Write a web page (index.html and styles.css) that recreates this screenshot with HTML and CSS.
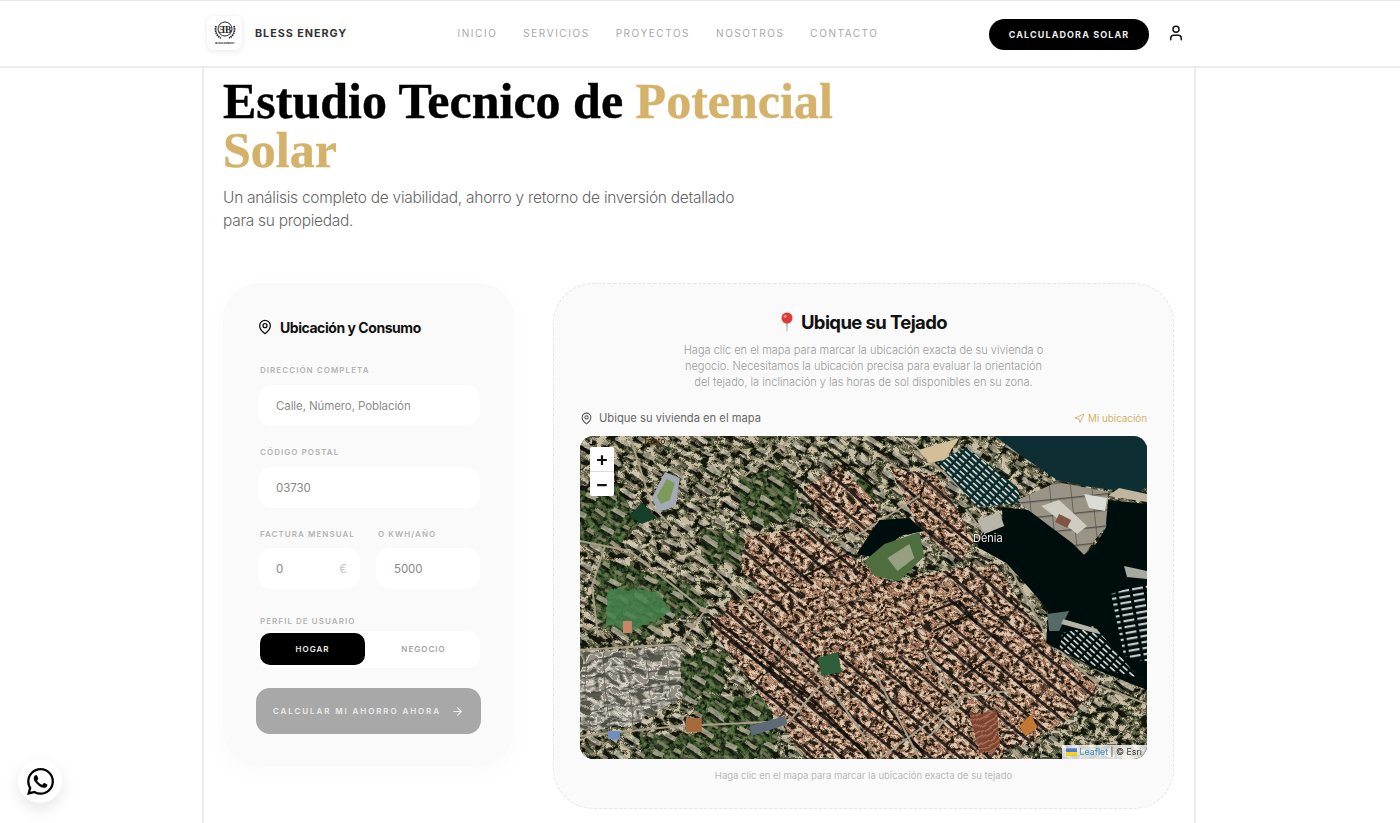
FILE: index.html
```html
<!DOCTYPE html>
<html lang="es">
<head>
    <title>Bless Energy - Estudio Solar</title>
    <meta name="viewport" content="width=device-width, initial-scale=1.0">
    <link rel="stylesheet" href="styles.css">
</head>
<body>
    <div class="header">
        <div class="header-inner">
            <div class="brand">
                <div class="logo">
                    <svg width="26" height="26" viewBox="0 0 26 26" fill="none" stroke="#222">
                        <circle cx="13" cy="9" r="7" stroke-width="1"/>
                        <path d="M4 6c-1.500 5 .5 10 5 12M22 6c1.500 5-.5 10-5 12" stroke-width="1.800" stroke-dasharray="1.500 .7"/>
                        <text x="13" y="12.500" text-anchor="middle" class="logo-mark">ƎB</text>
                        <text x="13" y="24" text-anchor="middle" class="logo-text">BLESS ENERGY</text>
                    </svg>
                </div>
                <span class="brand-name">BLESS ENERGY</span>
            </div>
            <ul class="nav">
                <li><a href="#">INICIO</a></li>
                <li><a href="#">SERVICIOS</a></li>
                <li><a href="#">PROYECTOS</a></li>
                <li><a href="#">NOSOTROS</a></li>
                <li><a href="#">CONTACTO</a></li>
            </ul>
            <div class="header-actions">
                <a href="#" class="cta">CALCULADORA SOLAR</a>
                <svg class="user-icon" width="18" height="18" viewBox="0 0 24 24" fill="none" stroke="#111" stroke-width="2" stroke-linecap="round" stroke-linejoin="round">
                    <path d="M19 21v-2a4 4 0 0 0-4-4H9a4 4 0 0 0-4 4v2"/>
                    <circle cx="12" cy="7" r="4"/>
                </svg>
            </div>
        </div>
    </div>

    <div class="main">
        <h1>Estudio Tecnico de <span class="gold">Potencial</span> <span class="gold">Solar</span></h1>
        <p class="subtitle">Un análisis completo de viabilidad, ahorro y retorno de inversión detallado para su propiedad.</p>

        <div class="columns">
            <div class="form-card">
                <h3>
                    <svg width="16" height="16" viewBox="0 0 24 24" fill="none" stroke="#111" stroke-width="2" stroke-linecap="round" stroke-linejoin="round">
                        <path d="M20 10c0 6-8 12-8 12s-8-6-8-12a8 8 0 0 1 16 0Z"/>
                        <circle cx="12" cy="10" r="3"/>
                    </svg>
                    Ubicación y Consumo
                </h3>

                <label class="field-label">DIRECCIÓN COMPLETA</label>
                <input class="field" type="text" placeholder="Calle, Número, Población">

                <label class="field-label">CÓDIGO POSTAL</label>
                <input class="field" type="text" value="03730">

                <div class="field-row">
                    <div class="field-col">
                        <label class="field-label">FACTURA MENSUAL</label>
                        <div class="field-wrap">
                            <input class="field" type="text" value="0">
                            <span class="euro">€</span>
                        </div>
                    </div>
                    <div class="field-col">
                        <label class="field-label">O KWH/AÑO</label>
                        <input class="field" type="text" value="5000">
                    </div>
                </div>

                <label class="field-label profile-label">PERFIL DE USUARIO</label>
                <div class="toggle">
                    <div class="toggle-item active">HOGAR</div>
                    <div class="toggle-item">NEGOCIO</div>
                </div>

                <button class="submit">
                    CALCULAR MI AHORRO AHORA
                    <svg width="13" height="13" viewBox="0 0 24 24" fill="none" stroke="#eee" stroke-width="2" stroke-linecap="round" stroke-linejoin="round">
                        <path d="M5 12h14M12 5l7 7-7 7"/>
                    </svg>
                </button>
            </div>

            <div class="map-card">
                <h2>
                    <svg width="14" height="20" viewBox="0 0 14 20">
                        <path d="M6.300 10h1.400L7.300 19.500h-.6Z" fill="#9a9a9a"/>
                        <circle cx="7" cy="6" r="5.500" fill="#dd3b35"/>
                        <circle cx="5.200" cy="4.200" r="1.500" fill="#f3908a"/>
                    </svg>
                    Ubique su Tejado
                </h2>
                <p class="map-desc">Haga clic en el mapa para marcar la ubicación exacta de su vivienda o negocio. Necesitamos la ubicación precisa para evaluar la orientación del tejado, la inclinación y las horas de sol disponibles en su zona.</p>

                <div class="map-bar">
                    <span class="map-bar-title">
                        <svg width="13" height="13" viewBox="0 0 24 24" fill="none" stroke="#555" stroke-width="2" stroke-linecap="round" stroke-linejoin="round">
                            <path d="M20 10c0 6-8 12-8 12s-8-6-8-12a8 8 0 0 1 16 0Z"/>
                            <circle cx="12" cy="10" r="3"/>
                        </svg>
                        Ubique su vivienda en el mapa
                    </span>
                    <span class="locate">
                        <svg width="11" height="11" viewBox="0 0 24 24" fill="none" stroke="#d4b26a" stroke-width="2" stroke-linecap="round" stroke-linejoin="round">
                            <polygon points="3 11 22 2 13 21 11 13 3 11"/>
                        </svg>
                        Mi ubicación
                    </span>
                </div>

                <div class="map">
                    <svg class="map-img" viewBox="0 0 568 323" preserveAspectRatio="none">
                        <defs>
                            <!-- street grids laid over the roof noise -->
                            <pattern id="streets-old" width="10" height="17" patternUnits="userSpaceOnUse" patternTransform="rotate(-22)">
                                <rect width="10" height="1.400" fill="#1a130e" opacity=".7"/>
                                <rect width="1" height="17" fill="#2a1f18" opacity=".35"/>
                            </pattern>
                            <pattern id="streets-town" width="37" height="19" patternUnits="userSpaceOnUse" patternTransform="rotate(40)">
                                <rect width="37" height="3" fill="#110c09" opacity=".8"/>
                                <rect y="3" width="37" height="2" fill="#d8ccb8" opacity=".35"/>
                                <rect width="2" height="19" fill="#1c1510" opacity=".65"/>
                                <rect x="18" y="9" width="1.500" height="10" fill="#1c1510" opacity=".5"/>
                            </pattern>
                            <pattern id="bars-west" width="31" height="21" patternUnits="userSpaceOnUse" patternTransform="rotate(30)">
                                <rect x="2" y="2" width="15" height="5" fill="#d4cbb8"/>
                                <rect x="2" y="7" width="15" height="3" fill="#0b0b08"/>
                                <rect x="20" y="12" width="9" height="4" fill="#c2b49c"/>
                                <rect x="20" y="16" width="9" height="2.500" fill="#0b0b08"/>
                                <rect x="4" y="14" width="11" height="3" fill="#9c8f7a"/>
                            </pattern>
                            <pattern id="bars-ind" width="21" height="16" patternUnits="userSpaceOnUse" patternTransform="rotate(-6)">
                                <rect width="21" height="1.400" fill="#44443e" opacity=".8"/>
                                <rect width="1" height="16" fill="#50504a" opacity=".7"/>
                            </pattern>
                            <pattern id="boats" width="9" height="4.500" patternUnits="userSpaceOnUse" patternTransform="rotate(42)">
                                <rect width="6.500" height="1.700" fill="#cfd8d4"/>
                            </pattern>
                            <pattern id="boats-v" width="14" height="6" patternUnits="userSpaceOnUse" patternTransform="rotate(-10)">
                                <rect width="11" height="2.200" fill="#c4cdcb"/>
                            </pattern>
                            <pattern id="stripes" width="5" height="5" patternUnits="userSpaceOnUse" patternTransform="rotate(-30)">
                                <rect width="5" height="5" fill="#7c4432"/>
                                <rect width="5" height="1.500" fill="#ad7458"/>
                            </pattern>

                            <!-- noise mapped to a small palette, cut to the shape it is put on -->
                            <filter id="roofs" x="0" y="0" width="100%" height="100%" color-interpolation-filters="sRGB">
                                <feTurbulence type="fractalNoise" baseFrequency=".2 .26" numOctaves="2" seed="3"/>
                                <feColorMatrix values="3.400 0 0 0 -1.200  3.400 0 0 0 -1.200  3.400 0 0 0 -1.200  0 0 0 0 1"/>
                                <feComponentTransfer>
                                    <feFuncR type="discrete" tableValues=".16 .38 .55 .66 .76 .62 .84"/>
                                    <feFuncG type="discrete" tableValues=".13 .28 .41 .50 .64 .42 .78"/>
                                    <feFuncB type="discrete" tableValues=".10 .22 .32 .40 .52 .34 .68"/>
                                </feComponentTransfer>
                                <feComposite in2="SourceAlpha" operator="in"/>
                            </filter>
                            <filter id="mixed" x="0" y="0" width="100%" height="100%" color-interpolation-filters="sRGB">
                                <feTurbulence type="fractalNoise" baseFrequency=".13 .17" numOctaves="3" seed="12"/>
                                <feColorMatrix values="3.400 0 0 0 -1.200  3.400 0 0 0 -1.200  3.400 0 0 0 -1.200  0 0 0 0 1"/>
                                <feComponentTransfer>
                                    <feFuncR type="discrete" tableValues=".09 .18 .28 .42 .62 .38 .78"/>
                                    <feFuncG type="discrete" tableValues=".10 .22 .32 .42 .58 .38 .74"/>
                                    <feFuncB type="discrete" tableValues=".07 .14 .21 .32 .48 .29 .64"/>
                                </feComponentTransfer>
                                <feComposite in2="SourceAlpha" operator="in"/>
                            </filter>
                            <filter id="trees" x="0" y="0" width="100%" height="100%" color-interpolation-filters="sRGB">
                                <feTurbulence type="fractalNoise" baseFrequency=".22" numOctaves="2" seed="21"/>
                                <feColorMatrix values="3.400 0 0 0 -1.200  3.400 0 0 0 -1.200  3.400 0 0 0 -1.200  0 0 0 0 1"/>
                                <feComponentTransfer>
                                    <feFuncR type="discrete" tableValues=".07 .13 .17 .21 .27 .33"/>
                                    <feFuncG type="discrete" tableValues=".12 .21 .27 .32 .37 .42"/>
                                    <feFuncB type="discrete" tableValues=".06 .10 .13 .16 .19 .24"/>
                                </feComponentTransfer>
                                <feComposite in2="SourceAlpha" operator="in"/>
                            </filter>
                            <filter id="sheds" x="0" y="0" width="100%" height="100%" color-interpolation-filters="sRGB">
                                <feTurbulence type="fractalNoise" baseFrequency=".09 .16" numOctaves="2" seed="7"/>
                                <feColorMatrix values="3.400 0 0 0 -1.200  3.400 0 0 0 -1.200  3.400 0 0 0 -1.200  0 0 0 0 1"/>
                                <feComponentTransfer>
                                    <feFuncR type="discrete" tableValues=".34 .50 .62 .74 .84 .58"/>
                                    <feFuncG type="discrete" tableValues=".35 .50 .61 .73 .83 .56"/>
                                    <feFuncB type="discrete" tableValues=".30 .46 .56 .68 .78 .51"/>
                                </feComponentTransfer>
                                <feComposite in2="SourceAlpha" operator="in"/>
                            </filter>
                            <filter id="rough" x="0" y="0" width="100%" height="100%">
                                <feTurbulence type="fractalNoise" baseFrequency=".05" numOctaves="2" seed="4" result="n"/>
                                <feDisplacementMap in="SourceGraphic" in2="n" scale="10"/>
                                <feGaussianBlur stdDeviation=".75"/>
                            </filter>
                            <filter id="soft">
                                <feGaussianBlur stdDeviation=".7"/>
                            </filter>
                        </defs>

                        <rect width="568" height="323" fill="#4d5239"/>

                        <g filter="url(#rough)">
                            <!-- suburbs over the whole sheet -->
                            <rect width="568" height="323" filter="url(#mixed)"/>

                            <!-- vegetation -->
                            <g opacity=".85">
                                <path d="M0 55 38 48 60 92 30 118 0 108Z" filter="url(#trees)"/>
                                <path d="M160 42 205 30 222 72 182 92 158 70Z" filter="url(#trees)"/>
                                <path d="M120 92 168 100 163 130 125 125Z" filter="url(#trees)"/>
                                <path d="M18 122 110 148 128 168 60 205 14 190Z" filter="url(#trees)"/>
                                <path d="M100 218 148 216 140 258 100 262Z" filter="url(#trees)"/>
                                <path d="M112 262 195 258 190 298 120 300Z" filter="url(#trees)"/>
                                <path d="M60 300 200 296 190 323 60 323Z" filter="url(#trees)"/>
                                <path d="M350 275 395 270 408 323 350 323Z" filter="url(#trees)"/>
                                <path d="M258 50 285 38 300 70 270 84Z" filter="url(#trees)"/>
                            </g>
                            <rect width="568" height="323" fill="url(#bars-west)" opacity=".62"/>
                            <path d="M28 152 78 156 92 176 52 198 26 188Z" fill="#47824e" opacity=".85"/>
                            <path d="M432 252 484 224 498 254 460 283Z" fill="#2f6e38"/>

                            <!-- industry in the south west -->
                            <path d="M0 216 100 210 102 262 50 290 0 296Z" filter="url(#sheds)"/>
                            <path d="M0 216 100 210 102 262 50 290 0 296Z" fill="url(#bars-ind)"/>

                            <!-- central town -->
                            <path d="M150 168 258 112 312 148 372 132 418 130 468 208 520 250 480 290 420 323 228 323 190 272 130 192Z" filter="url(#roofs)"/>
                            <path d="M150 168 258 112 312 148 372 132 418 130 468 208 520 250 480 290 420 323 228 323 190 272 130 192Z" fill="url(#streets-town)"/>
                            <path d="M165 100 232 92 262 115 190 160 160 135Z" filter="url(#roofs)"/>
                            <path d="M165 100 232 92 262 115 190 160 160 135Z" fill="url(#streets-town)"/>
                            <path d="M225 52 258 28 300 70 290 98 245 90Z" filter="url(#roofs)"/>
                            <path d="M225 52 258 28 300 70 290 98 245 90Z" fill="url(#streets-town)"/>
                            <path d="M310 30 358 40 395 105 380 125 340 95Z" filter="url(#roofs)"/>
                            <path d="M310 30 358 40 395 105 380 125 340 95Z" fill="url(#streets-town)"/>
                            <path d="M205 172 262 128 300 150 358 142 372 168 345 215 290 226 225 210Z" filter="url(#roofs)"/>
                            <path d="M205 172 262 128 300 150 358 142 372 168 345 215 290 226 225 210Z" fill="url(#streets-old)"/>

                            <!-- south east -->
                            <path d="M486 282 568 258 568 323 470 323Z" filter="url(#mixed)"/>
                            <path d="M392 278 418 275 420 310 400 318Z" fill="url(#stripes)"/>
                        </g>

                        <!-- main roads and long shadows -->
                        <g fill="none" stroke-linecap="round" filter="url(#soft)">
                            <g stroke="#0e0c09" stroke-width="2.400" opacity=".85">
                                <path d="M128 178 225 255 290 323"/>
                                <path d="M150 205 240 270"/>
                                <path d="M225 140 270 117"/>
                                <path d="M345 178 380 165 395 185"/>
                                <path d="M205 40 255 85"/>
                                <path d="M245 12 300 55"/>
                                <path d="M355 195 400 175"/>
                                <path d="M300 260 345 320"/>
                                <path d="M385 240 410 222"/>
                            </g>
                            <g stroke="#a89e88" stroke-width="2">
                                <path d="M0 214 100 208 125 175 50 115 0 105"/>
                                <path d="M50 0 72 70 130 130 250 250 300 323"/>
                                <path d="M387 74 430 130 470 205 520 250 568 268"/>
                                <path d="M0 300 100 290 210 285 240 250"/>
                                <path d="M18 200 12 150 25 110"/>
                                <path d="M330 5 395 65"/>
                                <path d="M290 226 340 323"/>
                                <path d="M345 215 380 270 350 300"/>
                                <path d="M300 323 385 260 430 255"/>
                                <path d="M165 40 215 0"/>
                                <path d="M258 112 340 60"/>
                            </g>
                        </g>

                        <g filter="url(#soft)">
                            <!-- sea and harbour -->
                            <path d="M416 0H568V51L558 57 511 51 478 44 438 17Z" fill="#0c2f33"/>
                            <path d="M358 27 387 11 438 51 442 67 398 71Z" fill="#0a2a2c"/>
                            <path d="M358 27 387 11 438 51 442 67 398 71Z" fill="url(#boats)"/>
                            <path d="M339 14 380 2 365 24 350 27Z" fill="#d2bf98"/>
                            <path d="M438 64 478 46 529 56 527 91 518 101 505 119 449 74Z" fill="#9a9486"/>
                            <path d="M438 64 478 46 529 56 527 91 518 101 505 119 449 74Z" fill="url(#bars-ind)"/>
                            <path d="M462 70 480 64 508 90 498 98Z" fill="#cfccc2"/>
                            <path d="M505 58 528 62 526 75 510 72Z" fill="#dcdcd6"/>
                            <path d="M480 78 492 84 488 92 476 86Z" fill="#805444"/>
                            <path d="M529 60 568 66V58L540 52Z" fill="#c0b6a0"/>
                            <path d="M423 71 449 74 493 107 505 119 518 107 527 91 529 64 568 68V254L518 234 467 207 469 174 449 151 427 127 398 111 405 94 423 84Z" fill="#03100f"/>
                            <path d="M398 84 420 76 425 90 405 98Z" fill="#b8b6a8"/>
                            <path d="M532 158 568 146V226L545 220Z" fill="url(#boats-v)"/>
                            <path d="M483 197 515 190 560 242 520 232 480 214Z" fill="url(#boats)"/>
                            <path d="M482 188 520 198 518 193 484 183Z" fill="#b4b4a6"/>
                            <path d="M468 178 490 175 480 195 470 195Z" fill="#8ea8a0" opacity=".6"/>
                            <path d="M545 130 568 135V143L548 141Z" fill="#a8aaa0"/>
                            <!-- castle hill with its shadow -->
                            <path d="M277 118 300 84 330 82 345 95 320 100 300 122Z" fill="#060a10"/>
                            <path d="M285 125 305 108 340 96 345 120 320 145 295 140Z" fill="#4f6e40"/>
                            <path d="M308 122 330 108 335 122 318 135Z" fill="#96a080"/>
                            <!-- stadium and pitches -->
                            <path d="M72 62 85 36 100 42 96 70 78 76Z" fill="#a4a9b4"/>
                            <path d="M77 60 87 43 95 47 90 64 81 68Z" fill="#7d9a5a"/>
                            <path d="M50 80 62 66 76 82 62 88Z" fill="#163f2b"/>
                            <path d="M238 222 258 216 262 236 242 240Z" fill="#2e5e3a"/>
                            <rect x="43" y="185" width="9" height="12" fill="#c88468"/>
                            <rect x="28" y="295" width="12" height="8" fill="#6f8fc0"/>
                            <rect x="106" y="282" width="16" height="14" fill="#a66a3c"/>
                            <path d="M170 290 205 280 208 288 172 300Z" fill="#5e6a78"/>
                            <path d="M440 290 452 278 458 292 446 300Z" fill="#c07830"/>
                        </g>
                    </svg>

                    <span class="map-label label-town">Tanto</span>
                    <span class="map-label label-denia">Dénia</span>

                    <div class="zoom">
                        <div class="zoom-btn">+</div>
                        <div class="zoom-btn">−</div>
                    </div>

                    <div class="attribution">
                        <svg width="11" height="8" viewBox="0 0 12 8">
                            <rect width="12" height="4" fill="#4c7be1"/>
                            <rect y="4" width="12" height="3" fill="#ffd500"/>
                            <rect y="7" width="12" height="1" fill="#e0bc00"/>
                        </svg>
                        <a href="#">Leaflet</a> | © Esri
                    </div>
                </div>

                <p class="map-note">Haga clic en el mapa para marcar la ubicación exacta de su tejado</p>
            </div>
        </div>
    </div>

    <a href="#" class="whatsapp">
        <svg width="27" height="27" viewBox="0 0 24 24" fill="#000">
            <path d="M17.472 14.382c-.297-.149-1.758-.867-2.03-.967-.273-.099-.471-.148-.67.15-.197.297-.767.966-.94 1.164-.173.199-.347.223-.644.075-.297-.15-1.255-.463-2.39-1.475-.883-.788-1.48-1.761-1.653-2.059-.173-.297-.018-.458.13-.606.134-.133.298-.347.446-.52.149-.174.198-.298.298-.497.099-.198.05-.371-.025-.52-.075-.149-.669-1.612-.916-2.207-.242-.579-.487-.5-.669-.51-.173-.008-.371-.01-.57-.01-.198 0-.52.074-.792.372-.272.297-1.04 1.016-1.04 2.479 0 1.462 1.065 2.875 1.213 3.074.149.198 2.096 3.2 5.077 4.487.709.306 1.262.489 1.694.625.712.227 1.36.195 1.871.118.571-.085 1.758-.719 2.006-1.413.248-.694.248-1.289.173-1.413-.074-.124-.272-.198-.57-.347m-5.421 7.403h-.004a9.87 9.87 0 01-5.031-1.378l-.361-.214-3.741.982.998-3.648-.235-.374a9.86 9.86 0 01-1.51-5.26c.001-5.45 4.436-9.884 9.888-9.884 2.64 0 5.122 1.03 6.988 2.898a9.825 9.825 0 012.893 6.994c-.003 5.45-4.437 9.884-9.885 9.884m8.413-18.297A11.815 11.815 0 0012.05 0C5.495 0 .16 5.335.157 11.892c0 2.096.547 4.142 1.588 5.945L.057 24l6.305-1.654a11.882 11.882 0 005.683 1.448h.005c6.554 0 11.89-5.335 11.893-11.893a11.821 11.821 0 00-3.48-8.413z"/>
        </svg>
    </a>
</body>
</html>
```

FILE: styles.css
```css
html, body {
    height: 100%;
    overflow: hidden;
}
body {
    font-family: Inter, "Liberation Sans", sans-serif;
    margin: 0;
    padding: 0;
    background-color: white;
    color: #111;
}
.header {
    height: 65px;
    background-color: white;
    border-top: 1px solid #e8e8e8;
    border-bottom: 2px solid #ececec;
}
.header-inner {
    width: 978px;
    height: 64px;
    margin-left: 207px;
    display: flex;
    align-items: center;
    justify-content: space-between;
}
.brand {
    display: flex;
    align-items: center;
    gap: 13px;
}
.logo {
    width: 35px;
    height: 34px;
    border-radius: 7px;
    background-color: white;
    box-shadow: 0 1px 6px rgba(0,0,0,0.1);
    display: flex;
    align-items: center;
    justify-content: center;
}
.logo-mark {
    font-family: "Liberation Serif", serif;
    font-size: 9.5px;
    font-weight: 700;
    fill: #222;
    stroke: none;
}
.logo-text {
    font-size: 2.6px;
    font-weight: 700;
    fill: #222;
    stroke: none;
}
.brand-name {
    font-size: 10.8px;
    font-weight: 700;
    letter-spacing: 0.95px;
    color: #333;
}
.nav {
    list-style-type: none;
    margin: 0;
    padding: 0;
    display: flex;
    gap: 26px;
}
.nav li {
    line-height: 14px;
}
.nav a {
    display: block;
    font-size: 10px;
    letter-spacing: 1.55px;
    color: #a8a8a8;
    text-decoration: none;
}
.header-actions {
    display: flex;
    align-items: center;
    gap: 18px;
}
.cta {
    width: 160px;
    height: 31px;
    margin-top: 3px;
    line-height: 31px;
    text-align: center;
    border-radius: 16px;
    background-color: black;
    color: #eee;
    font-size: 9px;
    font-weight: 700;
    letter-spacing: 1.1px;
    text-decoration: none;
}
.user-icon {
    display: block;
}
.main {
    width: 994px;
    margin-left: 202px;
    padding: 9px 20px 40px 19px;
    box-sizing: border-box;
    min-height: 800px;
    border-left: 2px solid #ececec;
    border-right: 2px solid #ececec;
}
h1 {
    max-width: 640px;
    margin: 0;
    font-family: "Liberation Serif", serif;
    font-size: 50px;
    line-height: 49px;
    font-weight: 700;
    color: black;
    -webkit-text-stroke: 0.4px currentColor;
}
.gold {
    color: #d4b26a;
}
.subtitle {
    max-width: 530px;
    margin: 11px 0 0;
    font-size: 15.5px;
    line-height: 23px;
    font-weight: 300;
    letter-spacing: -0.28px;
    color: #666;
}
.columns {
    display: grid;
    grid-template-columns: 291px 621px;
    gap: 39px;
    align-items: start;
    margin-top: 51px;
}
.form-card {
    padding: 34px 34px 32px 35px;
    border-radius: 36px;
    background-color: #fafafa;
    box-shadow: 0 6px 24px rgba(0,0,0,0.025);
}
.form-card h3 {
    display: flex;
    align-items: center;
    gap: 7px;
    height: 20px;
    margin: 0 0 28px -1px;
    font-size: 14px;
    font-weight: 700;
    letter-spacing: -0.45px;
    color: #111;
}
.field-label {
    display: block;
    height: 10px;
    margin: 0 0 10px 2px;
    font-size: 8px;
    line-height: 10px;
    font-weight: 600;
    letter-spacing: 1.05px;
    color: #b4b4b4;
    white-space: nowrap;
}
.field {
    display: block;
    width: 100%;
    height: 41px;
    margin-bottom: 21px;
    padding: 0 18px;
    box-sizing: border-box;
    border: none;
    border-radius: 14px;
    background-color: white;
    font-family: inherit;
    font-size: 11.5px;
    letter-spacing: -0.1px;
    color: #888;
}
.field::placeholder {
    color: #8c8c8c;
    opacity: 1;
}
.field-row {
    display: grid;
    grid-template-columns: 102px 104px;
    gap: 16px;
}
.field-row .field-label {
    margin-bottom: 9px;
}
.field-wrap {
    position: relative;
}
.euro {
    position: absolute;
    right: 13px;
    top: 13px;
    font-size: 12px;
    color: #c8c8c8;
}
.field-row .field {
    margin-bottom: 27px;
}
.profile-label {
    margin-bottom: 5px;
}
.toggle {
    display: grid;
    grid-template-columns: 105px 1fr;
    height: 32px;
    padding: 2px 2px 3px;
    border-radius: 12px;
    background-color: white;
}
.toggle-item {
    display: flex;
    align-items: center;
    justify-content: center;
    border-radius: 10px;
    font-size: 8px;
    font-weight: 600;
    letter-spacing: 1px;
    color: #a4a4a4;
}
.toggle-item + .toggle-item {
    padding-left: 4px;
}
.toggle-item.active {
    background-color: black;
    color: #eee;
}
.submit {
    display: flex;
    align-items: center;
    justify-content: space-between;
    width: 225px;
    height: 46px;
    margin: 20px 0 0 -2px;
    padding: 0 17px;
    box-sizing: border-box;
    border: none;
    border-radius: 14px;
    background-color: #a8a8a8;
    font-family: inherit;
    font-size: 8px;
    font-weight: 600;
    letter-spacing: 1.9px;
    color: #eaeaea;
    white-space: nowrap;
}
.submit svg {
    flex-shrink: 0;
}
.map-card {
    padding: 26px;
    border: 1px dashed #e4e4e4;
    border-radius: 40px;
    background-color: #fafafa;
}
.map-card h2 {
    display: flex;
    align-items: center;
    justify-content: center;
    gap: 7px;
    height: 24px;
    margin: 0;
    font-size: 18.5px;
    font-weight: 700;
    letter-spacing: -0.6px;
    color: #111;
}
.map-desc {
    max-width: 368px;
    margin: 8px auto 0;
    font-size: 11px;
    line-height: 16px;
    font-weight: 300;
    text-align: center;
    color: #9a9a9a;
}
.map-bar {
    display: flex;
    align-items: center;
    justify-content: space-between;
    height: 16px;
    margin-top: 20px;
}
.map-bar-title {
    display: flex;
    align-items: center;
    gap: 6px;
    font-size: 11.2px;
    color: #666;
}
.locate {
    display: flex;
    align-items: center;
    gap: 3px;
    font-size: 9.8px;
    color: #d4b26a;
}
.map {
    position: relative;
    height: 323px;
    margin-top: 10px;
    border-radius: 14px;
    overflow: hidden;
    background-color: #4d5239;
}
.map-img {
    display: block;
    width: 100%;
    height: 100%;
}
.map-label {
    position: absolute;
    font-size: 11px;
    color: #eee;
    text-shadow: 0 0 2px black, 0 0 2px black;
}
.label-town {
    left: 63px;
    top: 0;
    font-size: 8.5px;
    color: #1e1406;
    text-shadow: 0 0 1px #c08a30;
}
.label-denia {
    left: 393px;
    top: 95px;
}
.zoom {
    position: absolute;
    left: 10px;
    top: 11px;
    width: 24px;
    background-color: white;
    border-radius: 2px;
}
.zoom-btn {
    height: 24px;
    line-height: 24px;
    text-align: center;
    font-size: 20px;
    font-weight: 600;
    color: #111;
}
.zoom-btn + .zoom-btn {
    border-top: 1px solid #ddd;
}
.attribution {
    position: absolute;
    right: 0;
    bottom: 0;
    height: 14px;
    padding: 0 5px 0 4px;
    background-color: rgba(255,255,255,0.8);
    font-size: 8.8px;
    line-height: 14px;
    color: #333;
    white-space: nowrap;
}
.attribution svg {
    vertical-align: -1px;
}
.attribution a {
    color: #3b8fc0;
    text-decoration: none;
}
.map-note {
    height: 12px;
    margin: 11px 0 0;
    font-size: 9.5px;
    line-height: 12px;
    text-align: center;
    color: #b8b8b8;
}
.whatsapp {
    position: fixed;
    left: 18px;
    bottom: 20px;
    width: 44px;
    height: 44px;
    border-radius: 50%;
    background-color: white;
    box-shadow: 0 6px 16px rgba(0,0,0,0.1);
    display: flex;
    align-items: center;
    justify-content: center;
}
```
